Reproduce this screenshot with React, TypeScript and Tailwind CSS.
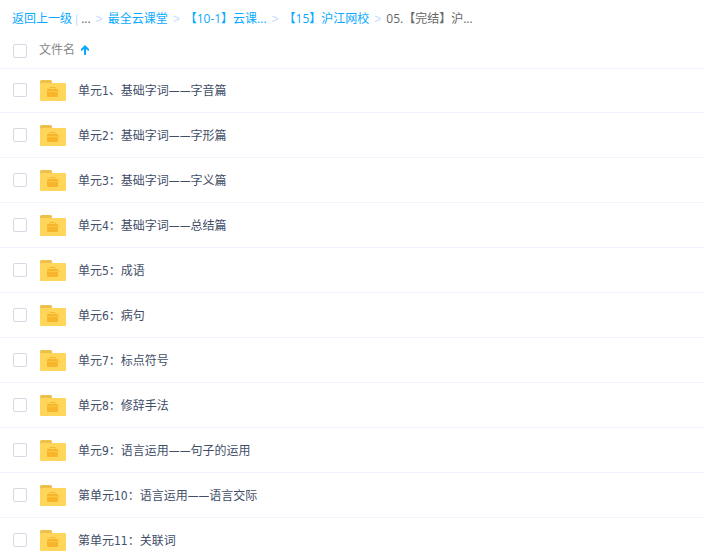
import { useState } from "react";

const crumbs = ["最全云课堂", "【10-1】云课...", "【15】沪江网校"];

const folders = [
  "单元1、基础字词——字音篇",
  "单元2：基础字词——字形篇",
  "单元3：基础字词——字义篇",
  "单元4：基础字词——总结篇",
  "单元5：成语",
  "单元6：病句",
  "单元7：标点符号",
  "单元8：修辞手法",
  "单元9：语言运用——句子的运用",
  "第单元10：语言运用——语言交际",
  "第单元11：关联词",
];

const checkboxClass =
  "size-3.5 shrink-0 appearance-none rounded-xs border border-[#d5d9e4] bg-white checked:border-[#09aaff] checked:bg-[#09aaff]";

function FolderIcon() {
  return (
    <svg width="26" height="22" viewBox="0 0 26 22" className="shrink-0" aria-hidden="true">
      <path d="M0 5V1.5Q0 0 1.5 0H10.5Q12 0 12 1.5V5Z" fill="#eebf4b" />
      <path d="M0 3H25Q26 3 26 4V20Q26 21 25 21H1Q0 21 0 20Z" fill="#ffd659" />
      <path d="M9.5 9.5V8.5Q9.5 7.5 10.5 7.5H14.5Q15.5 7.5 15.5 8.5V9.5" fill="none" stroke="#f7b52c" />
      <path d="M8 9H17Q18 9 18 10V11H7V10Q7 9 8 9Z" fill="#f7b52c" />
      <path d="M7 11H20V12H7Z" fill="#fbc640" />
      <path d="M7 12H18V16Q18 17 17 17H8Q7 17 7 16Z" fill="#f7b52c" />
    </svg>
  );
}

function SortArrow() {
  return (
    <svg width="8" height="10" viewBox="0 0 8 10" aria-hidden="true">
      <path d="M4 0L8 4V5.8H7L5 4V10H3V4L1 5.8H0V4Z" fill="#09aaff" />
    </svg>
  );
}

function Separator() {
  return <span className="mx-[5px] font-['Liberation_Sans',sans-serif] text-[#c4dbfe]">&gt;</span>;
}

function Breadcrumb() {
  return (
    <nav className="flex h-8 items-center px-3 pt-1.5 font-['Open_Sans','Noto_Sans_CJK_SC',sans-serif] text-xs whitespace-nowrap text-[#09aaff]">
      <a href="#back">返回上一级</a>
      <span className="mx-[3px] font-['Liberation_Sans',sans-serif] text-[#c4dbfe]">|</span>
      <span className="text-[#666]">...</span>
      {crumbs.map(name => (
        <span key={name} className="flex">
          <Separator />
          <a href="#folder">{name}</a>
        </span>
      ))}
      <Separator />
      <span className="text-[#666]">05.【完结】沪...</span>
    </nav>
  );
}

export default function App() {
  const [selected, setSelected] = useState<string[]>([]);

  function toggle(name: string) {
    setSelected(prev => (prev.includes(name) ? prev.filter(n => n !== name) : [...prev, name]));
  }

  return (
    <main className="bg-white font-['DejaVu_Sans_Condensed','Noto_Sans_CJK_SC',sans-serif] text-xs text-[#424e67]">
      <Breadcrumb />

      {/* Column header */}
      <div className="-mb-px flex h-[37px] items-center border-b border-[#f0f4fd] px-[13px] pt-px">
        <input
          type="checkbox"
          aria-label="全选"
          className={checkboxClass}
          checked={selected.length === folders.length}
          onChange={e => setSelected(e.target.checked ? folders : [])}
        />
        <button className="ml-3 flex items-center gap-1.5 pb-0.5 text-[#888]">
          文件名
          <SortArrow />
        </button>
      </div>

      <ul>
        {folders.map(name => (
          <li key={name} className="border-b border-[#f0f4fd]">
            <label className="flex h-11 items-center px-[13px]">
              <input
                type="checkbox"
                className={checkboxClass}
                checked={selected.includes(name)}
                onChange={() => toggle(name)}
              />
              <span className="ml-[13px] flex items-center gap-3 pt-0.5">
                <FolderIcon />
                <span>{name}</span>
              </span>
            </label>
          </li>
        ))}
      </ul>
    </main>
  );
}
